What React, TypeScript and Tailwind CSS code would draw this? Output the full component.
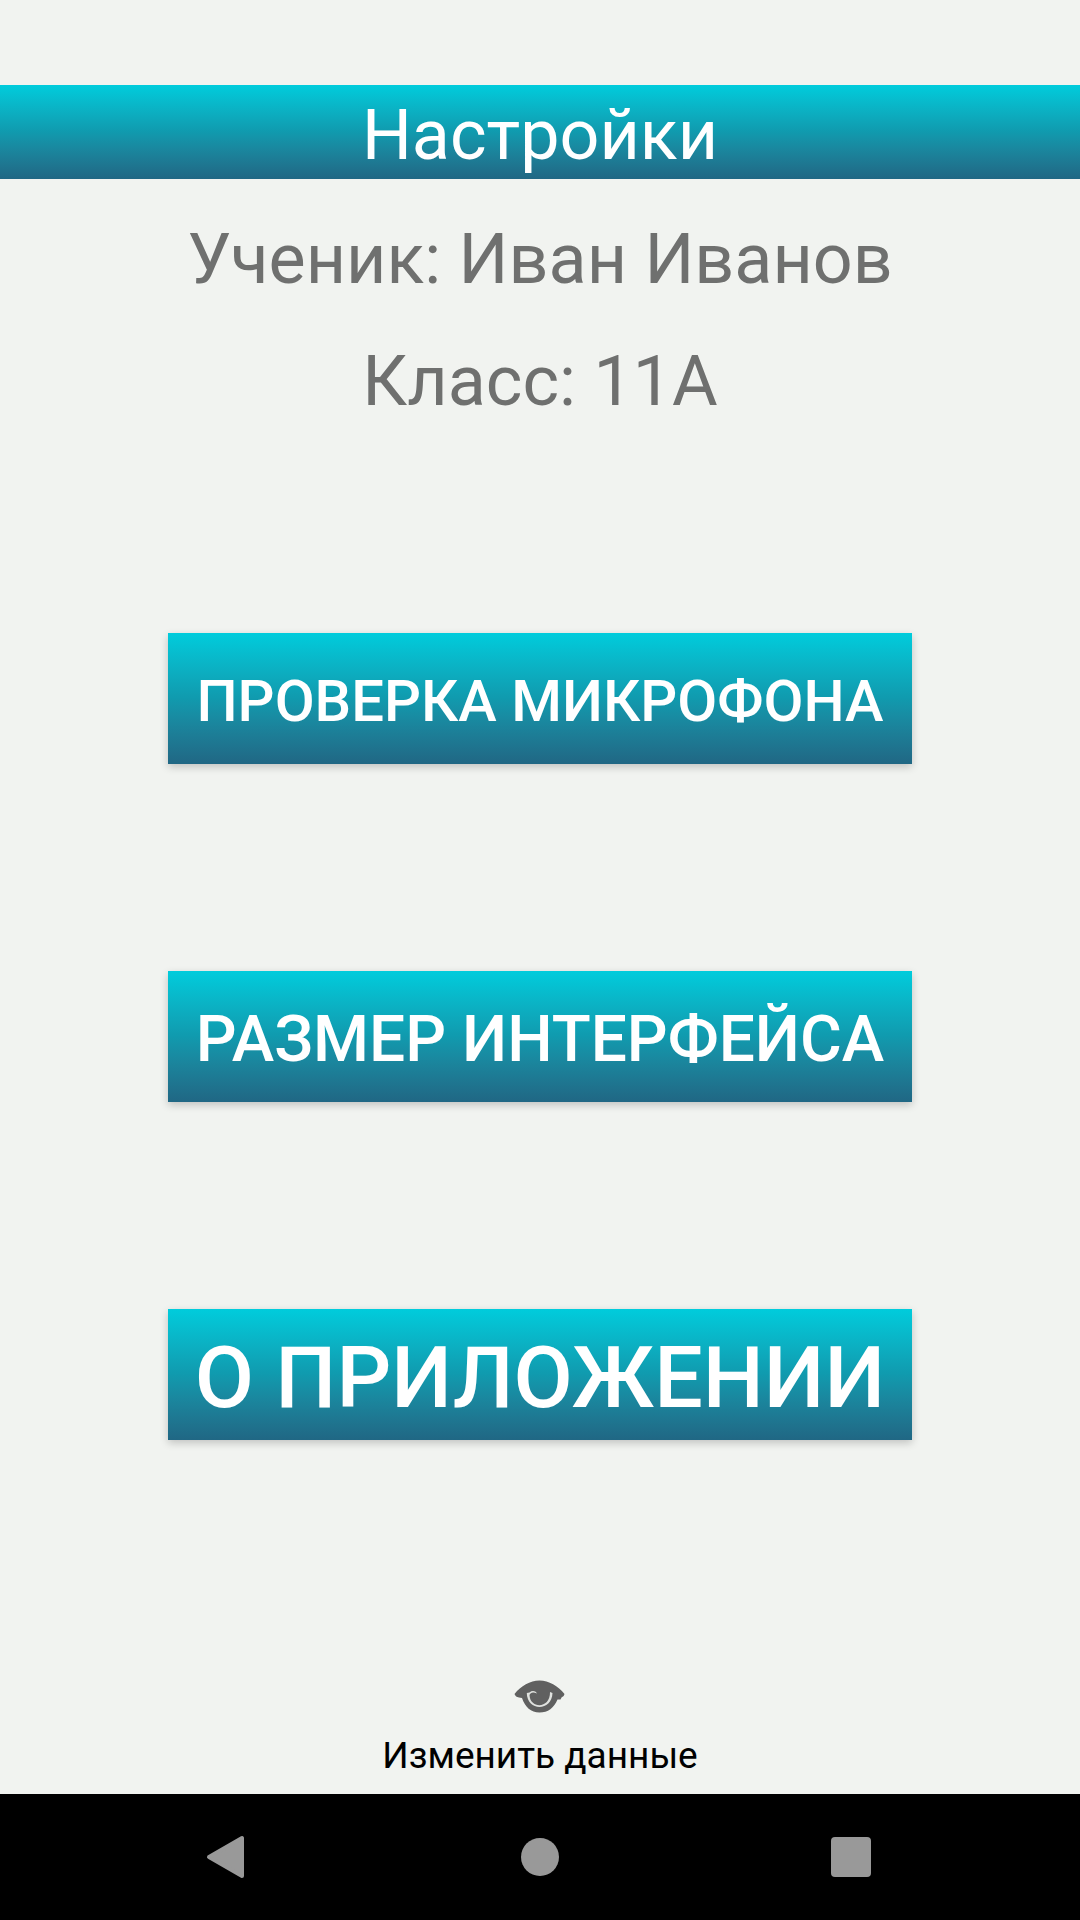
const bar = "bg-linear-to-b from-[#00ccdc] via-[#109aae] to-[#206784] text-white";
const btn = "flex h-[131px] w-full items-center justify-center whitespace-nowrap pt-1.5 font-medium shadow-[0_3px_8px_rgba(0,0,0,0.2)]";

export default function App() {
  return (
    <div className="flex min-h-screen flex-col bg-[#f1f3f0] font-[Roboto,sans-serif]">
      <main className="flex grow flex-col items-center pt-[85px]">
        <h1 className={`${bar} flex h-[94px] w-full items-center justify-center pt-1.5 text-[70px] leading-none`}>Настройки</h1>
        <p className="mt-[39px] text-[70px] leading-[82px] text-[#6f706f]">Ученик: Иван Иванов</p>
        <p className="mt-10 text-[70px] leading-[82px] text-[#6f706f]">Класс: 11А</p>
        <div className="mt-[211px] flex w-full flex-col gap-[207px] px-[168px]">
          <button type="button" className={`${bar} ${btn} text-[58px]`}>ПРОВЕРКА МИКРОФОНА</button>
          <button type="button" className={`${bar} ${btn} text-[64px]`}>РАЗМЕР ИНТЕРФЕЙСА</button>
          <button type="button" className={`${bar} ${btn} text-[86px]`}>О ПРИЛОЖЕНИИ</button>
        </div>
        <button type="button" className="mt-auto flex flex-col items-center pb-4 text-[37px] leading-[44px] text-black">
          <svg className="mb-5 h-[34px] w-[52px]" viewBox="0 0 52 34" aria-hidden="true">
            <path d="M0.500 14C7 6 16 0.500 25.500 0.500C35 0.500 44 6 50.500 14Q50 17 47.500 17.500L46.500 19.500L43.500 19.500C40 28 34 32.500 25.500 32.500C17 32.500 11 27 8 18L5 17.500Q1.500 17 0.500 14Z" fill="#606060" />
            <path d="M12.800 13C13 31.500 38 31.500 38.500 13L36 12C36.500 29 16 29 15.500 15C16.500 12.500 19 11.800 23 13.500C21 10.500 18 10.500 15.500 12.500Z" fill="#e0e2df" />
          </svg>
          Изменить данные
        </button>
      </main>
      <nav className="flex h-[126px] items-center justify-around bg-black px-[72px]">
        <button type="button" aria-label="Назад"><svg className="h-11 w-11" viewBox="0 0 44 44"><path d="M3 22L36 3V41Z" fill="#999" stroke="#999" strokeWidth="4" strokeLinejoin="round" /></svg></button>
        <button type="button" aria-label="Домой"><svg className="h-11 w-11" viewBox="0 0 44 44"><circle cx="22" cy="22" r="19" fill="#999" /></svg></button>
        <button type="button" aria-label="Обзор"><svg className="h-11 w-11" viewBox="0 0 44 44"><rect x="1" y="2" width="40" height="40" rx="4" fill="#999" /></svg></button>
      </nav>
    </div>
  );
}
